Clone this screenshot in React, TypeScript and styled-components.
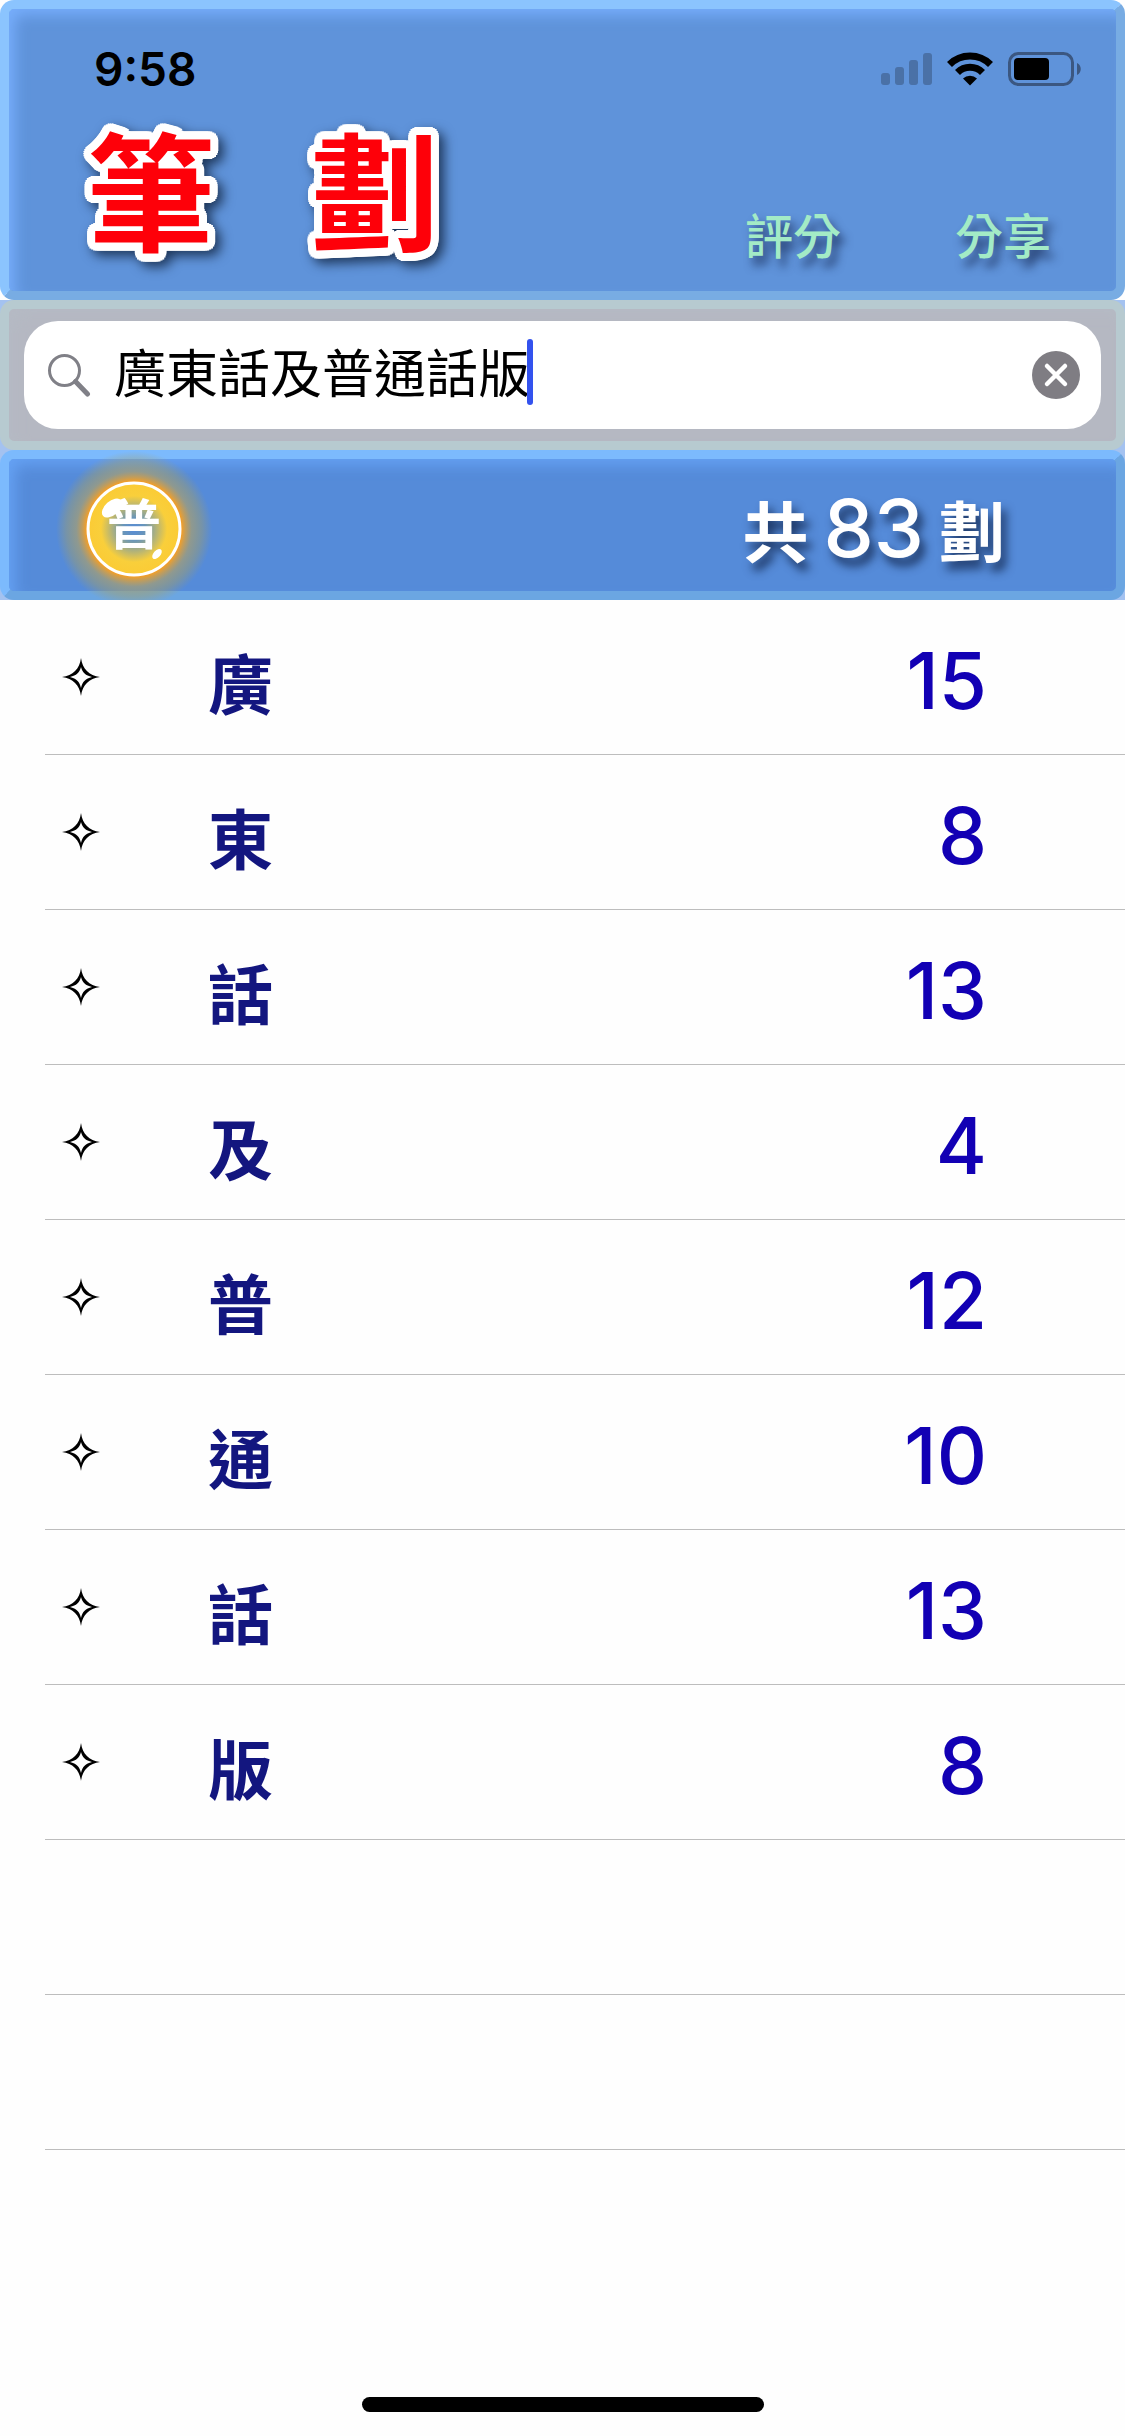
import React, { useState } from "react";
import styled, { createGlobalStyle } from "styled-components";

const CJK = `"Noto Sans CJK TC", "Noto Sans CJK HK", sans-serif`;

const ring = (radius: number, color: string) =>
  Array.from({ length: 24 }, (_, i) => {
    const angle = (i / 24) * Math.PI * 2;
    return `${(Math.cos(angle) * radius).toFixed(2)}px ${(Math.sin(angle) * radius).toFixed(2)}px 0 ${color}`;
  }).join(", ");

const TITLE_OUTLINE = `${ring(8, "#fff")}, ${ring(4, "#fff")}`;

const GlobalStyle = createGlobalStyle`
  *, *::before, *::after { box-sizing: border-box; }
  body { margin: 0; background: #fefefe; font-family: ${CJK}; }
  button { font: inherit; border: 0; padding: 0; background: none; cursor: pointer; }
`;

const Page = styled.div`
  display: flex;
  flex-direction: column;
  min-height: 100vh;
`;

const Bars = styled.div`
  overflow: hidden;
  background: #a4c2f0;
`;

const Panel = styled.div<{ $fill: string; $light: string; $dark: string; $glow: string }>`
  border: 9px solid;
  border-color: ${p => p.$light} ${p => p.$dark} ${p => p.$dark} ${p => p.$light};
  border-radius: 14px;
  background: ${p => p.$fill};
  box-shadow: inset 8px 8px 14px -2px ${p => p.$glow};
`;

const Header = styled(Panel).attrs({ as: "header" })`
  padding: 40px 0 33px;
`;

const StatusBar = styled.div`
  display: flex;
  align-items: center;
  justify-content: space-between;
  height: 40px;
  padding: 0 34px 0 85px;
`;

const Clock = styled.time`
  font: 600 46px/40px Inter, sans-serif;
  color: #000;
`;

const StatusIcons = styled.div`
  display: flex;
  align-items: center;
  gap: 15px;
`;

const TitleRow = styled.div`
  display: flex;
  align-items: flex-end;
  justify-content: space-between;
  margin-top: 36px;
  padding: 0 65px 0 78px;
`;

const Title = styled.h1`
  display: flex;
  gap: 96px;
  margin: 0;
  padding-bottom: 9px;
  font-size: 128px;
  font-weight: 700;
  line-height: 124px;
  color: #fe0009;
  text-shadow: ${TITLE_OUTLINE};
  filter: drop-shadow(5px 5px 6px rgba(10, 25, 50, 0.75));
`;

const Actions = styled.nav`
  display: flex;
  gap: 114px;
`;

const ActionButton = styled.button`
  && {
    font-size: 48px;
    font-weight: 500;
    line-height: 50px;
  }
  color: #a3ebc6;
  text-shadow: 5px 8px 10px rgba(15, 30, 70, 0.75);
`;

const SearchPanel = styled(Panel)`
  padding: 12px 15px;
`;

const SearchField = styled.label`
  display: flex;
  align-items: center;
  height: 108px;
  padding: 0 21px 0 24px;
  border-radius: 34px;
  background: #fff;
`;

const SearchInput = styled.input`
  margin: 0 0 0 23px;
  padding: 0 0 8px;
  border: 0;
  outline: 0;
  background: none;
  font: 400 52px/76px ${CJK};
  color: #000;
  caret-color: transparent;
`;

const Caret = styled.span`
  width: 6px;
  height: 66px;
  margin: 0 0 6px -3px;
  border-radius: 3px;
  background: #3352ee;
`;

const ClearButton = styled.button`
  display: flex;
  margin-left: auto;
`;

const Summary = styled(Panel)`
  display: flex;
  align-items: center;
  justify-content: space-between;
  height: 150px;
  padding: 0 111px 0 50px;
`;

const BadgeButton = styled.button`
  display: flex;
  width: 150px;
  height: 132px;
`;

const Total = styled.p`
  display: flex;
  align-items: center;
  gap: 15px;
  margin: 0;
  padding-top: 6px;
  font-size: 66px;
  font-weight: 700;
  line-height: 80px;
  color: #fff;
  text-shadow: 5px 8px 10px rgba(10, 25, 60, 0.75);
`;

const TotalNumber = styled.span`
  font: 500 80px/80px Inter, sans-serif;
`;

const List = styled.ul`
  margin: 0;
  padding: 0 0 0 45px;
  list-style: none;
`;

const Row = styled.li`
  display: flex;
  align-items: center;
  height: 155px;
  padding: 2px 138px 2px 17px;
  border-bottom: 1px solid #bdbdbd;
`;

const Character = styled.span`
  margin-left: 108px;
  padding-top: 8px;
  font-size: 65px;
  font-weight: 700;
  line-height: 80px;
  color: #13167f;
`;

const Strokes = styled.span`
  margin-left: auto;
  padding-top: 8px;
  font: 500 78px/80px Inter, sans-serif;
  color: #1200b4;
`;

const HomeIndicator = styled.div`
  width: 402px;
  height: 15px;
  margin: auto auto 24px;
  border-radius: 8px;
  background: #000;
`;

const SignalIcon = () => (
  <svg width="51" height="34" viewBox="0 0 51 34" fill="#4a71a7" aria-hidden="true">
    <rect x="0" y="21" width="9" height="12" rx="3" />
    <rect x="14" y="15" width="9" height="18" rx="3" />
    <rect x="28" y="8" width="9" height="25" rx="3" />
    <rect x="42" y="1" width="9" height="32" rx="3" />
  </svg>
);

const WifiIcon = () => (
  <svg width="46" height="34" viewBox="0 0 46 34" aria-hidden="true">
    <g fill="none" stroke="#000" strokeWidth="7">
      <path d="M2.5 12.5 A29 29 0 0 1 43.5 12.5" />
      <path d="M10.5 20.5 A17.6 17.6 0 0 1 35.5 20.5" />
    </g>
    <path d="M23 33.5 L16 26.5 A10 10 0 0 1 30 26.5 Z" fill="#000" />
  </svg>
);

const BatteryIcon = () => (
  <svg width="74" height="34" viewBox="0 0 74 34" aria-hidden="true">
    <rect x="1.5" y="1.5" width="63" height="31" rx="9" fill="none" stroke="#3b5781" strokeWidth="3" />
    <rect x="6" y="6" width="35" height="22" rx="4" fill="#000" />
    <path d="M69 11 C74 13 74 21 69 23 Z" fill="#3b5781" />
  </svg>
);

const SearchIcon = () => (
  <svg width="43" height="44" viewBox="0 0 43 44" fill="none" stroke="#808087" aria-hidden="true">
    <circle cx="16.5" cy="17.5" r="15" strokeWidth="3" />
    <path d="M27.5 28.5 L39.5 41" strokeWidth="5" strokeLinecap="round" />
  </svg>
);

const ClearIcon = () => (
  <svg width="48" height="48" viewBox="0 0 48 48" aria-hidden="true">
    <circle cx="24" cy="24" r="24" fill="#7f7d83" />
    <path d="M15 15 L33 33 M33 15 L15 33" stroke="#fff" strokeWidth="4.5" strokeLinecap="round" />
  </svg>
);

const Badge = () => (
  <svg width="150" height="150" viewBox="0 0 150 150" overflow="visible" aria-hidden="true">
    <defs>
      <radialGradient id="halo">
        <stop offset="0.6" stopColor="#ff9f1c" />
        <stop offset="0.66" stopColor="#d9a040" stopOpacity="0.85" />
        <stop offset="0.74" stopColor="#a89f70" stopOpacity="0.7" />
        <stop offset="0.87" stopColor="#a8a060" stopOpacity="0.4" />
        <stop offset="1" stopColor="#a8a060" stopOpacity="0" />
      </radialGradient>
      <radialGradient id="disc">
        <stop offset="0" stopColor="#558bd9" />
        <stop offset="0.25" stopColor="#6a96b8" />
        <stop offset="0.72" stopColor="#f9cf3b" />
        <stop offset="1" stopColor="#fbcb35" />
      </radialGradient>
    </defs>
    <circle cx="75" cy="70" r="78" fill="url(#halo)" />
    <circle cx="75" cy="70" r="46" fill="url(#disc)" stroke="#fff" strokeWidth="3" />
    <ellipse cx="53" cy="49" rx="12" ry="7" fill="#fff" transform="rotate(-42 53 49)" />
    <ellipse cx="98" cy="95" rx="6" ry="3.5" fill="#fff" transform="rotate(-48 98 95)" />
    <text x="75" y="86" textAnchor="middle" fontFamily="Noto Sans CJK TC, sans-serif" fontSize="54" fontWeight="700" fill="#fff">
      普
    </text>
  </svg>
);

const Sparkle = () => (
  <svg width="38" height="38" viewBox="0 0 38 38" aria-hidden="true">
    <path
      fillRule="evenodd"
      d="M19 0 C20.5 11 27 17.5 38 19 C27 20.5 20.5 27 19 38 C17.5 27 11 20.5 0 19 C11 17.5 17.5 11 19 0 Z M19 9 C17.5 14.5 14.5 17.5 8 19 C14.5 20.5 17.5 23.5 19 30 C20.5 23.5 23.5 20.5 30 19 C23.5 17.5 20.5 14.5 19 9 Z"
    />
  </svg>
);

const STROKES: Record<string, number> = { 廣: 15, 東: 8, 話: 13, 及: 4, 普: 12, 通: 10, 版: 8 };
const EMPTY_ROWS = 2;

export default function App() {
  const [query, setQuery] = useState("廣東話及普通話版");
  const chars = Array.from(query);
  const total = chars.reduce((sum, c) => sum + (STROKES[c] ?? 0), 0);

  return (
    <Page>
      <GlobalStyle />
      <Header $fill="#5f93da" $light="#8bc4fe" $dark="#78ace3" $glow="#76adfb">
        <StatusBar>
          <Clock>9:58</Clock>
          <StatusIcons>
            <SignalIcon />
            <WifiIcon />
            <BatteryIcon />
          </StatusIcons>
        </StatusBar>
        <TitleRow>
          <Title>
            <span>筆</span>
            <span>劃</span>
          </Title>
          <Actions>
            <ActionButton>評分</ActionButton>
            <ActionButton>分享</ActionButton>
          </Actions>
        </TitleRow>
      </Header>
      <Bars>
        <SearchPanel $fill="#b5b8c2" $light="#b7cad0" $dark="#b7cad0" $glow="#b5bac4">
          <SearchField>
            <SearchIcon />
            <SearchInput
              aria-label="搜尋"
              value={query}
              onChange={e => setQuery(e.target.value)}
              style={{ width: `${chars.length}em` }}
            />
            <Caret />
            <ClearButton type="button" aria-label="清除" onClick={() => setQuery("")}>
              <ClearIcon />
            </ClearButton>
          </SearchField>
        </SearchPanel>
        <Summary $fill="#558bd9" $light="#7cbafd" $dark="#6ba6e2" $glow="#65a1f3">
          <BadgeButton type="button" aria-label="普通話">
            <Badge />
          </BadgeButton>
          <Total>
            共<TotalNumber>{total}</TotalNumber>劃
          </Total>
        </Summary>
      </Bars>
      <List>
        {chars.map((c, i) => (
          <Row key={i}>
            <Sparkle />
            <Character>{c}</Character>
            <Strokes>{STROKES[c]}</Strokes>
          </Row>
        ))}
        {Array.from({ length: EMPTY_ROWS }, (_, i) => (
          <Row key={`empty-${i}`} />
        ))}
      </List>
      <HomeIndicator />
    </Page>
  );
}
